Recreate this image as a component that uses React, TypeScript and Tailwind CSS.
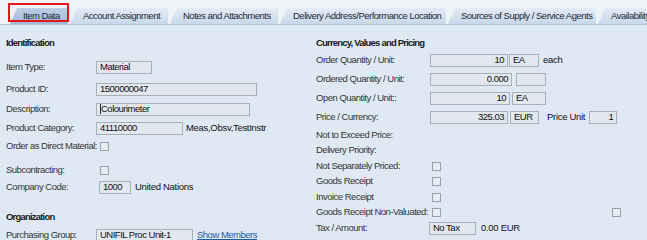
import React from 'react';

const tabs = [
  { label: 'Item Data', w: 'w-[58px]', active: true },
  { label: 'Account Assignment', w: 'w-[98px]' },
  { label: 'Notes and Attachments', w: 'w-[108px]' },
  { label: 'Delivery Address/Performance Location', w: 'w-[166px]' },
  { label: 'Sources of Supply / Service Agents', w: 'w-[148px]' },
  { label: 'Availability', w: 'w-[80px]' },
];

const Field: React.FC<{ w: string; value?: string; right?: boolean; caret?: boolean }> = ({ w, value = '', right, caret }) => (
  <div
    className={`${w} h-[13px] shrink-0 border border-[#a6b0ba] bg-[#e2e8ee] px-[3px] flex items-center leading-none overflow-hidden whitespace-nowrap text-[#111] ${right ? 'justify-end' : ''}`}
  >
    {caret && <span className="w-px h-[10px] bg-[#222]" />}
    <span>{value}</span>
  </div>
);

const Check: React.FC<{ className?: string }> = ({ className = '' }) => (
  <div className={`w-[9px] h-[9px] shrink-0 border border-[#97a2ad] bg-[#e6ecf2] ${className}`} />
);

const Row: React.FC<{ label: string; lw: string; mt: string; children?: React.ReactNode }> = ({ label, lw, mt, children }) => (
  <div className={`flex items-center h-[14px] ${mt}`}>
    <div className={`${lw} shrink-0 whitespace-nowrap`}>{label}</div>
    {children}
  </div>
);

const Val: React.FC<{ className?: string; children: React.ReactNode }> = ({ className = '', children }) => (
  <span className={`whitespace-nowrap font-medium tracking-[-0.3px] text-[#111] ${className}`}>{children}</span>
);

export default function App() {
  return (
    <div className="w-[647px] h-[240px] overflow-hidden bg-[#dfe9f3] text-[9.5px] tracking-[-0.5px] text-[#353535] font-['Liberation_Sans',Arial,sans-serif]">
      {/* tab strip */}
      <div className="relative h-[25px] bg-[#eef3f8] border-b border-[#b3c5d8] flex items-end pl-[10px] gap-[2px] overflow-hidden">
        {tabs.map((t) => (
          <div
            key={t.label}
            className={`${t.w} shrink-0 h-[16px] flex items-center pl-[13px] whitespace-nowrap overflow-hidden text-[#1e2a36] [clip-path:polygon(7px_0,100%_0,100%_100%,0_100%)] ${
              t.active ? 'bg-gradient-to-b from-[#bcd0e6] to-[#9fbad7]' : 'bg-gradient-to-b from-[#e4ecf5] to-[#c8d8ea]'
            }`}
          >
            {t.label}
          </div>
        ))}
        <div className="absolute left-[8px] top-[3px] w-[61px] h-[19px] border-2 border-[#e3161b]" />
      </div>

      <div className="flex">
        {/* left column */}
        <div className="w-[316px] pl-[6px] pt-[11px] flex flex-col">
          <div className="h-[14px] flex items-center font-bold tracking-[-0.8px] text-[#1a1a1a]">Identification</div>
          <Row label="Item Type:" lw="w-[90px]" mt="mt-[10px]">
            <Field w="w-[56px]" value="Material" />
          </Row>
          <Row label="Product ID:" lw="w-[90px]" mt="mt-[8px]">
            <Field w="w-[161px]" value="1500000047" />
          </Row>
          <Row label="Description:" lw="w-[90px]" mt="mt-[6px]">
            <Field w="w-[154px]" value="Colourimeter" caret />
          </Row>
          <Row label="Product Category:" lw="w-[90px]" mt="mt-[5px]">
            <Field w="w-[87px]" value="41110000" />
            <Val className="ml-[3px]">Meas,Obsv,TestInstr</Val>
          </Row>
          <Row label="Order as Direct Material:" lw="w-[94px]" mt="mt-[4px]">
            <Check />
          </Row>
          <Row label="Subcontracting:" lw="w-[94px]" mt="mt-[10px]">
            <Check />
          </Row>
          <Row label="Company Code:" lw="w-[93px]" mt="mt-[3px]">
            <Field w="w-[32px]" value="1000" />
            <Val className="ml-[4px]">United Nations</Val>
          </Row>
          <div className="h-[14px] mt-[16px] flex items-center font-bold tracking-[-0.8px] text-[#1a1a1a]">Organization</div>
          <Row label="Purchasing Group:" lw="w-[90px]" mt="mt-[4px]">
            <Field w="w-[97px]" value="UNIFIL Proc Unit-1" />
            <span className="ml-[4px] text-[#1d5ca6] underline whitespace-nowrap">Show Members</span>
          </Row>
        </div>

        {/* right column */}
        <div className="flex-1 pt-[11px] flex flex-col">
          <div className="h-[14px] flex items-center font-bold tracking-[-0.8px] text-[#1a1a1a]">Currency, Values and Pricing</div>
          <Row label="Order Quantity / Unit:" lw="w-[114px]" mt="mt-[3px]">
            <Field w="w-[78px]" value="10" right />
            <Field w="w-[30px] ml-[1px]" value="EA" />
            <Val className="ml-[4px]">each</Val>
          </Row>
          <Row label="Ordered Quantity / Unit:" lw="w-[114px]" mt="mt-[5px]">
            <Field w="w-[82px]" value="0.000" right />
            <Field w="w-[30px] ml-[4px]" />
          </Row>
          <Row label="Open Quantity / Unit::" lw="w-[114px]" mt="mt-[5px]">
            <Field w="w-[80px]" value="10" right />
            <Field w="w-[34px] ml-[2px]" value="EA" />
          </Row>
          <Row label="Price / Currency:" lw="w-[114px]" mt="mt-[5px]">
            <Field w="w-[78px]" value="325.03" right />
            <Field w="w-[29px] ml-[2px]" value="EUR" />
            <Val className="ml-[8px]">Price Unit</Val>
            <Field w="w-[28px] ml-[4px]" value="1" right />
          </Row>
          <Row label="Not to Exceed Price:" lw="w-[114px]" mt="mt-[4px]" />
          <Row label="Delivery Priority:" lw="w-[114px]" mt="mt-[1px]" />
          <Row label="Not Separately Priced:" lw="w-[116px]" mt="mt-[2px]">
            <Check />
          </Row>
          <Row label="Goods Receipt" lw="w-[116px]" mt="mt-[1px]">
            <Check />
          </Row>
          <Row label="Invoice Receipt" lw="w-[116px]" mt="mt-[2px]">
            <Check />
          </Row>
          <Row label="Goods Receipt Non-Valuated:" lw="w-[116px]" mt="mt-[1px]">
            <Check />
            <Check className="ml-[171px]" />
          </Row>
          <Row label="Tax / Amount:" lw="w-[113px]" mt="mt-[2px]">
            <Field w="w-[47px]" value="No Tax" />
            <Val className="ml-[5px]">0.00 EUR</Val>
          </Row>
        </div>
      </div>
    </div>
  );
}
